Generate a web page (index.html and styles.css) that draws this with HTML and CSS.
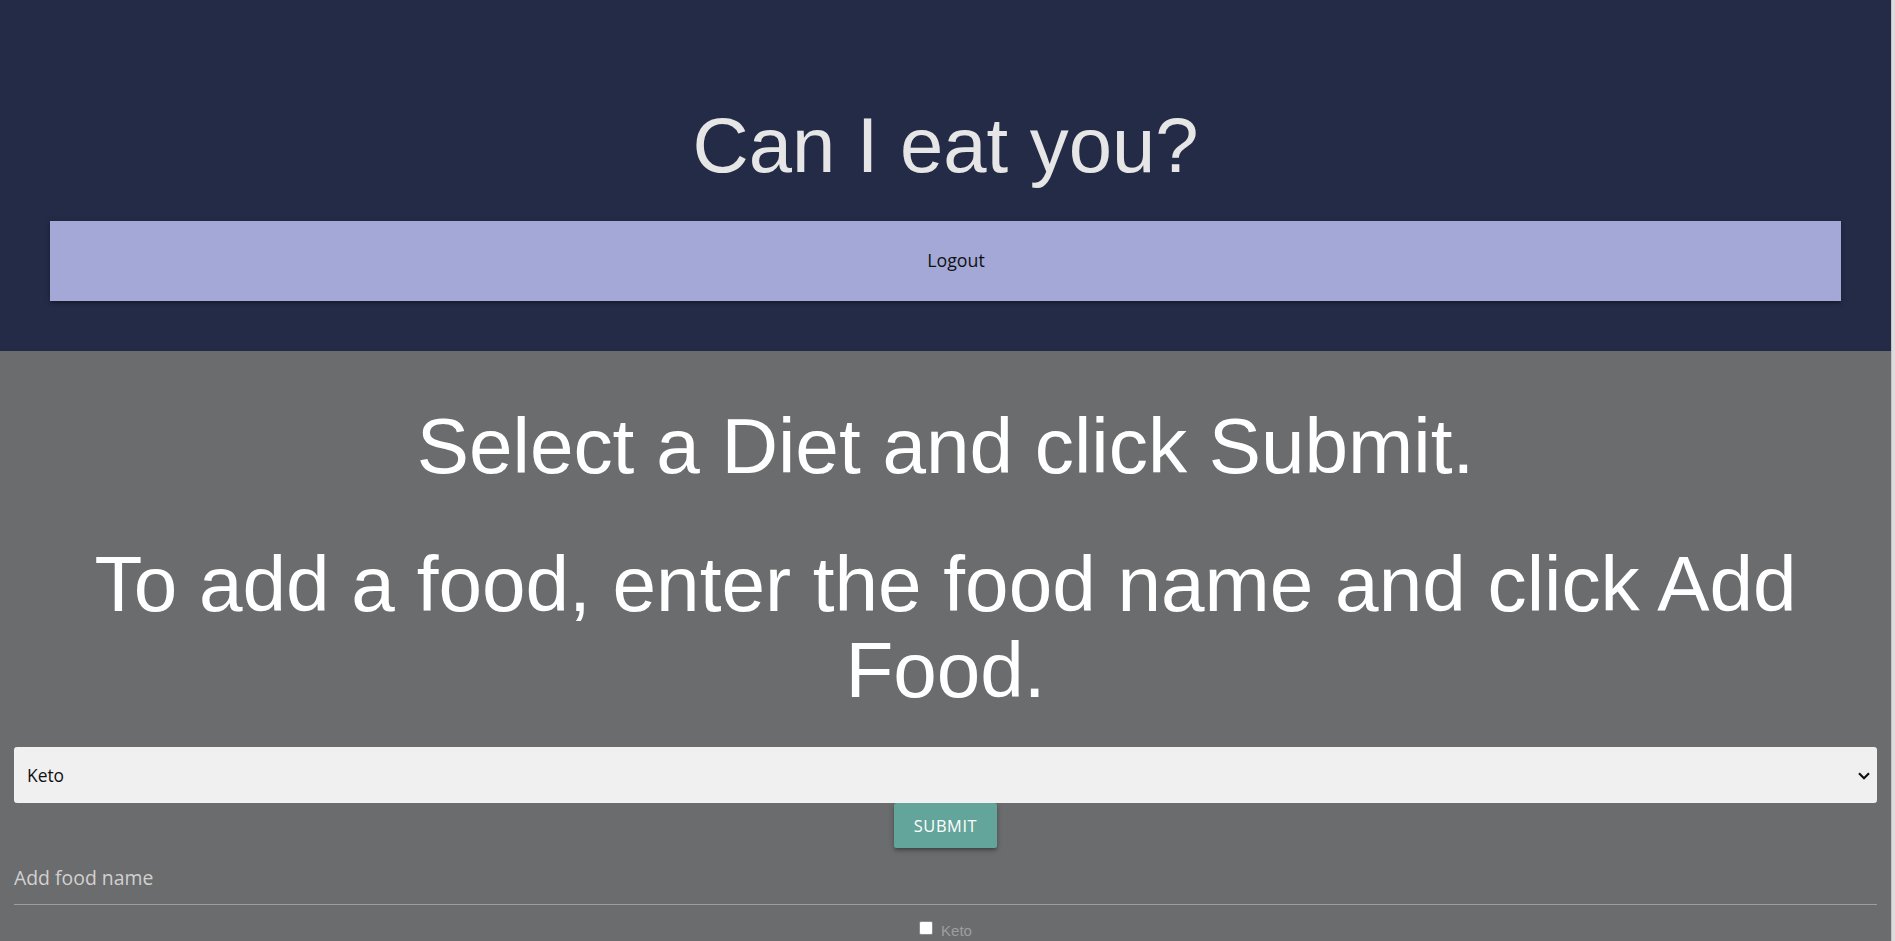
FILE: index.html
```html
<!DOCTYPE html>
<html lang="en">
<head>
<meta charset="utf-8">
<title>Can I eat you?</title>
<link rel="stylesheet" href="styles.css">
</head>
<body>
<header class="top">
  <h1 class="title">Can I eat you?</h1>
  <nav class="navbar"><a class="nav-link" href="#">Logout</a></nav>
</header>
<main class="content">
  <h1 class="heading">Select a Diet and click Submit.</h1>
  <h1 class="heading">To add a food, enter the food name and click Add Food.</h1>
  <form class="diet-form">
    <div class="select-wrap">
      <select class="diet-select"><option>Keto</option></select>
      <svg class="chevron" width="12" height="8" viewBox="0 0 12 8"><path d="M1 1.2 L6 6.2 L11 1.2" fill="none" stroke="#111" stroke-width="2.2"/></svg>
    </div>
    <div class="btn-row"><button type="button" class="btn">Submit</button></div>
    <input class="food-input" type="text" placeholder="Add food name">
    <div class="check-row">
      <span class="check"></span>
      <label class="check-label">Keto</label>
    </div>
  </form>
</main>
</body>
</html>
```
FILE: styles.css
```css
html {
  overflow: hidden;
}
body {
  margin: 0 4px 0 0;
  background: #6b6c6e;
  font-family: "Open Sans", "Noto Sans", sans-serif;
  color: rgba(0, 0, 0, 0.87);
}
body::after {
  content: "";
  position: fixed;
  top: 0;
  right: 0;
  width: 3px;
  height: 100%;
  background: #dcdcdc;
  border-left: 1px solid #c3c3c3;
}
.top {
  background: #242b47;
  padding: 50px 50px 50px;
}
.title,
.heading {
  font-family: "Liberation Sans", Arial, sans-serif;
  font-weight: 400;
  font-size: 78.3px;
  line-height: 86.6px;
  text-align: center;
  margin: 51.5px 0 33px;
}
.title {
  color: #e6e6e6;
  font-size: 77.8px;
}
.heading {
  color: #ffffff;
}
.navbar {
  height: 80px;
  background: #a3a8d7;
  display: flex;
  align-items: center;
  justify-content: center;
  box-shadow: 0 2.5px 2.5px 0 rgba(0,0,0,.14), 0 3.75px 1.25px -2.5px rgba(0,0,0,.12), 0 1.25px 6px 0 rgba(0,0,0,.2);
}
.nav-link {
  color: #111;
  text-decoration: none;
  font-size: 17.8px;
  line-height: 1;
  margin-left: 21px;
}
.content {
  display: flow-root;
  padding: 0 14px;
}
.diet-form {
  margin: 0;
}
.select-wrap {
  position: relative;
}
.diet-select {
  display: block;
  width: 100%;
  height: 56px;
  box-sizing: border-box;
  -webkit-appearance: none;
  appearance: none;
  background: rgba(255, 255, 255, 0.9);
  border: 1px solid #f2f2f2;
  border-radius: 2.5px;
  padding: 0 12px;
  font-family: "Open Sans", "Noto Sans", sans-serif;
  font-size: 17.4px;
  color: #111;
  outline: none;
}
.chevron {
  position: absolute;
  right: 7px;
  top: 25px;
}
.btn-row {
  display: flex;
  justify-content: center;
}
.btn {
  height: 45px;
  padding: 0 20px;
  border: none;
  border-radius: 2.5px;
  background: #64a59b;
  color: #fff;
  font-family: "Open Sans", "Noto Sans", sans-serif;
  font-size: 16.4px;
  letter-spacing: 0.6px;
  text-transform: uppercase;
  box-shadow: 0 2.5px 2.5px 0 rgba(0,0,0,.14), 0 3.75px 1.25px -2.5px rgba(0,0,0,.12), 0 1.25px 6px 0 rgba(0,0,0,.2);
}
.food-input {
  display: block;
  width: 100%;
  height: 52px;
  box-sizing: content-box;
  padding: 4px 0 0;
  margin: 0 0 10px;
  border: none;
  border-bottom: 1px solid #9e9e9e;
  background: transparent;
  font-family: "Open Sans", "Noto Sans", sans-serif;
  font-size: 19.4px;
  color: #fff;
  outline: none;
}
.food-input::placeholder {
  color: #d1d1d1;
}
.check-row {
  display: flex;
  justify-content: center;
  align-items: flex-start;
}
.check {
  width: 12px;
  height: 12px;
  margin-top: 6px;
  margin-right: 8px;
  background: #fff;
  border: 1px solid #8a8a8a;
  border-radius: 2px;
}
.check-label {
  font-family: "Liberation Sans", Arial, sans-serif;
  font-size: 15px;
  line-height: 17px;
  margin-top: 7px;
  color: #9e9e9e;
}
```
